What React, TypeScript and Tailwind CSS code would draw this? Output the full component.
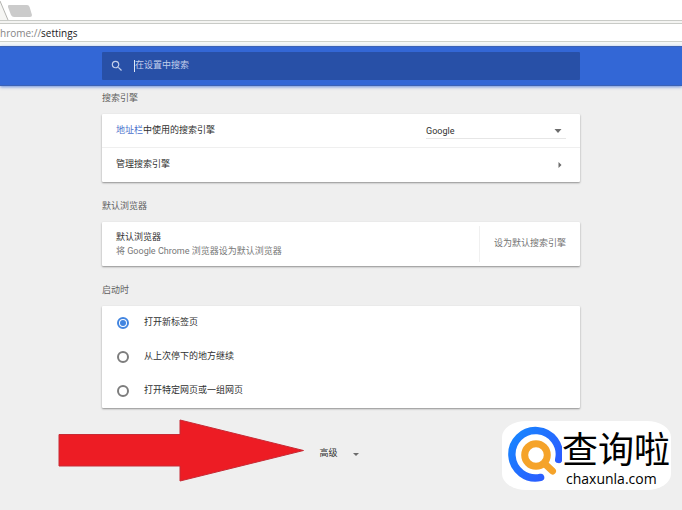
import { useState } from 'react';
import type { ReactNode } from 'react';

const startupOptions = ['打开新标签页', '从上次停下的地方继续', '打开特定网页或一组网页'];

function BrowserBar() {
  return (
    <div className="bg-white">
      <div className="h-5 overflow-hidden">
        <svg width="40" height="20" viewBox="0 0 40 20" fill="none" aria-hidden="true">
          <path d="M0 1L8 20H0Z" fill="#f6f6f4" />
          <path d="M0 1L8 20" stroke="#b4b4b0" />
          <path d="M9 5H27Q29 5 29.600 7L32 15Q32 17 30 17H14Q12 17 11 15L8 7Q7.500 5 9 5Z" fill="#cbcbcb" />
        </svg>
      </div>
      <div className="h-1 border-t border-b border-[#c9cbc7] bg-[#f4f4f2]" />
      <div className="flex h-[18px] items-center overflow-hidden border-b border-[#cdd0ca] font-['Open_Sans','Noto_Sans',sans-serif] text-[10px] leading-none text-[#202020]">
        <span className="text-[#858585]">hrome://</span>
        <span>settings</span>
      </div>
      <div className="h-1 bg-[#f4f7f8]" />
    </div>
  );
}

function SearchHeader() {
  return (
    <header className="relative border-t border-b border-[#3c62b4] bg-[#3367d6] py-[5px] shadow-[0_1px_3px_rgba(51,103,214,0.7)]">
      <label className="mx-auto flex h-7 w-full max-w-[478px] items-center rounded-[1px] bg-[#2850a7]">
        <svg className="ml-2 mr-2.5 shrink-0" width="14" height="14" viewBox="0 0 24 24" fill="#c3cfeb" aria-hidden="true">
          <path d="M15.500 14h-.79l-.28-.27A6.471 6.471 0 0 0 16 9.500 6.500 6.500 0 1 0 9.500 16c1.610 0 3.090-.59 4.230-1.570l.27.28v.79l5 4.990L20.490 19l-4.990-5zm-6 0C7.010 14 5 11.990 5 9.500S7.010 5 9.500 5 14 7.010 14 9.500 11.990 14 9.500 14z" />
        </svg>
        <span className="h-3 w-px bg-[#dfe6f5]" />
        <input
          type="search"
          placeholder="在设置中搜索"
          aria-label="在设置中搜索"
          className="min-w-0 flex-1 bg-transparent text-[9px] text-white outline-none placeholder:text-[#c3cfeb]"
        />
      </label>
    </header>
  );
}

function Section({ title, children }: { title: string; children: ReactNode }) {
  return (
    <section>
      <h2 className="mb-2 text-[9px] leading-4 text-[#5f5f5f]">{title}</h2>
      <div className="rounded-[1px] bg-white shadow-[0_1px_2px_rgba(0,0,0,0.4)]">{children}</div>
    </section>
  );
}

function Logo() {
  return (
    <div className="absolute bottom-5 right-[11px] flex h-[69px] w-[169px] rounded-[24px/16px] bg-white">
      <svg className="shrink-0" width="60" height="69" viewBox="0 0 60 69" fill="none" aria-hidden="true">
        <defs>
          <linearGradient id="ring" x1="6" y1="12" x2="56" y2="54" gradientUnits="userSpaceOnUse">
            <stop stopColor="#1688ff" />
            <stop offset="1" stopColor="#2e56ff" />
          </linearGradient>
        </defs>
        <path d="M38.600 56.400A23.700 23.700 0 1 1 56.700 38.500" stroke="url(#ring)" strokeWidth="7.400" strokeLinecap="round" />
        <circle cx="34" cy="34" r="11.300" stroke="#f5a32a" strokeWidth="7" />
        <path d="M43 43L50.500 50" stroke="#f5a32a" strokeWidth="7" strokeLinecap="round" />
      </svg>
      <div className="flex flex-col whitespace-nowrap pt-0.5 text-black">
        <span className="font-['Noto_Sans_CJK_SC',sans-serif] text-[36px] leading-[48px]">查询啦</span>
        <span className="pl-1 font-['Open_Sans','Noto_Sans',sans-serif] text-[14px] font-medium leading-4">chaxunla.com</span>
      </div>
    </div>
  );
}

function App() {
  const [startup, setStartup] = useState(startupOptions[0]);

  return (
    <div className="relative min-h-screen bg-[#efefef] font-['Roboto','Noto_Sans_CJK_SC',sans-serif] text-[9px] text-[#303030]">
      <BrowserBar />
      <SearchHeader />

      <main className="mx-auto flex w-full max-w-[478px] flex-col gap-4 pt-1">
        {/* 搜索引擎 */}
        <Section title="搜索引擎">
          <div className="flex h-[34px] items-center justify-between border-b border-[#efefef] px-3.5">
            <label htmlFor="engine">
              <a href="#omnibox" className="text-[#4a70cc]">地址栏</a>中使用的搜索引擎
            </label>
            <div className="relative w-[140px]">
              <select
                id="engine"
                defaultValue="Google"
                className="h-4 w-full appearance-none border-b border-[#e6e6e6] bg-transparent font-['Roboto',sans-serif] text-[9px] leading-4 outline-none"
              >
                <option>Google</option>
              </select>
              <svg className="pointer-events-none absolute right-1 top-1.5" width="8" height="4" viewBox="0 0 8 4" fill="#6c6c6c" aria-hidden="true">
                <path d="M0.500 0H7.500L4 4Z" />
              </svg>
            </div>
          </div>
          <button type="button" className="flex h-[34px] w-full items-center justify-between pl-3.5 pr-[18px] text-left">
            管理搜索引擎
            <svg width="4" height="6" viewBox="0 0 4 6" fill="#6c6c6c" aria-hidden="true">
              <path d="M0.500 0L3.500 3L0.500 6Z" />
            </svg>
          </button>
        </Section>

        {/* 默认浏览器 */}
        <Section title="默认浏览器">
          <div className="flex items-stretch justify-between py-1">
            <div className="flex h-9 flex-col justify-center pl-3.5">
              <p className="leading-[14px]">默认浏览器</p>
              <p className="leading-[14px] text-[#777777]">将 Google Chrome 浏览器设为默认浏览器</p>
            </div>
            <button type="button" className="border-l border-[#f0f0f0] px-3.5 text-[#737373]">
              设为默认搜索引擎
            </button>
          </div>
        </Section>

        {/* 启动时 */}
        <Section title="启动时">
          {startupOptions.map((option) => (
            <label key={option} className="flex h-[34px] items-center gap-[15px] pl-[15px]">
              <input
                type="radio"
                name="startup"
                checked={startup === option}
                onChange={() => setStartup(option)}
                className="size-3 appearance-none rounded-full border-2 border-[#7d7d7d] bg-clip-content p-px checked:border-[#4285e0] checked:bg-[#4285e0]"
              />
              {option}
            </label>
          ))}
        </Section>

        <button type="button" className="mt-5 flex h-5 items-center gap-[15px] self-center pr-1">
          高级
          <svg width="6" height="3" viewBox="0 0 6 3" fill="#6c6c6c" aria-hidden="true">
            <path d="M0 0H6L3 3Z" />
          </svg>
        </button>
      </main>

      {/* Seta apontando para 高级 */}
      <svg className="absolute bottom-7 left-[58px]" width="247" height="63" viewBox="0 0 247 63" aria-hidden="true">
        <path d="M1 15.500H122V1L245.500 31.500L122 62V47H1Z" fill="#ed1c24" stroke="#c72a35" strokeLinejoin="round" />
      </svg>

      <Logo />
    </div>
  );
}

export default App;
